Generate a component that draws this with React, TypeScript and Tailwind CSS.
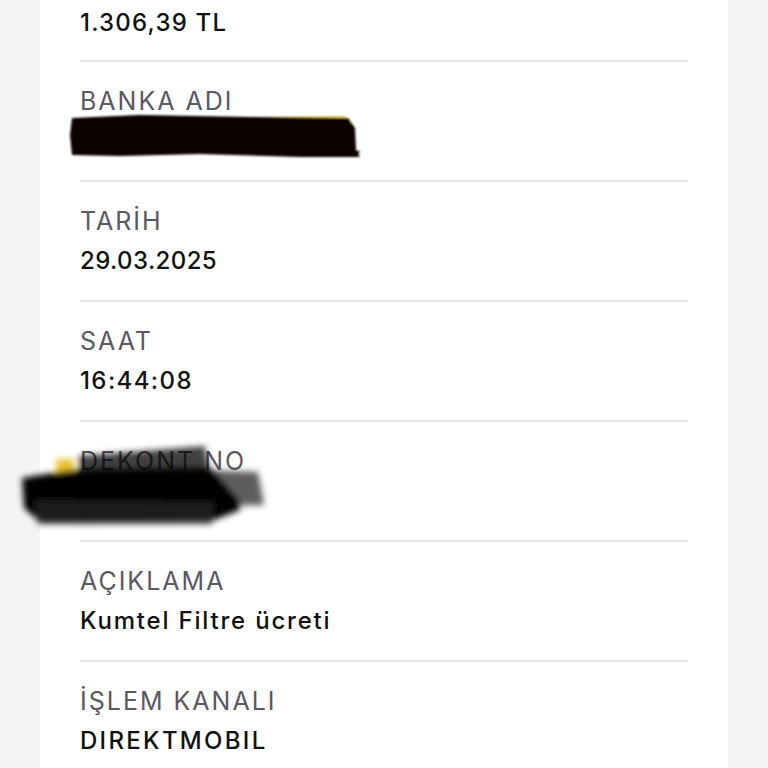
import React from "react";

const rows: { label: string; value: string; lt: string; vt: string }[] = [
  { label: "BANKA ADI", value: "", lt: "tracking-[2px]", vt: "" },
  { label: "TARİH", value: "29.03.2025", lt: "tracking-[2px]", vt: "tracking-[0.4px]" },
  { label: "SAAT", value: "16:44:08", lt: "tracking-[2px]", vt: "tracking-[1.4px]" },
  { label: "DEKONT NO", value: "", lt: "tracking-[2px]", vt: "" },
  { label: "AÇIKLAMA", value: "Kumtel Filtre ücreti", lt: "tracking-[2px]", vt: "tracking-[1.8px]" },
  { label: "İŞLEM KANALI", value: "DIREKTMOBIL", lt: "tracking-[2px]", vt: "tracking-[2.3px]" },
];

export default function App() {
  return (
    <div className="relative w-[768px] h-[768px] overflow-hidden bg-[#f4f4f6]" style={{ fontFamily: "Inter, 'Noto Sans', sans-serif" }}>
      <div className="mx-[40px] h-full bg-white px-[40px]">
        <div className="h-[3px]" />
        <div className="h-[40px] leading-[40px] text-[24px] font-medium text-[#111111] tracking-[1.2px]">1.306,39 TL</div>
        <div className="h-[17px]" />
        {rows.map((r) => (
          <div key={r.label}>
            <div className="h-[2px] bg-[#e6e6e8]" />
            <div className="pt-[19px] pb-[19px]">
              <div className={"h-[40px] leading-[40px] text-[25px] text-[#5a5860] " + r.lt}>{r.label}</div>
              <div className={"h-[40px] leading-[40px] text-[24px] font-medium text-[#111111] " + r.vt}>{r.value}</div>
            </div>
          </div>
        ))}
      </div>
      <svg className="absolute left-0 top-0 pointer-events-none" width="768" height="768" viewBox="0 0 768 768">
        <defs>
          <filter id="b1" x="-10%" y="-50%" width="120%" height="200%">
            <feGaussianBlur stdDeviation="1.2" />
          </filter>
          <filter id="b2" x="-10%" y="-50%" width="120%" height="200%">
            <feGaussianBlur stdDeviation="3" />
          </filter>
        </defs>
        <g filter="url(#b1)">
          <path d="M200 118 L345 116 L352 122 L352 140 Z" fill="#e8c53a" opacity="0.9" />
          <path d="M72 118 L140 115 L250 117 L348 118 L355 128 L356 150 L360 157 L300 157 L200 154 L120 156 L72 155 L70 135 Z" fill="#080604" />
          <circle cx="358" cy="152" r="1.5" fill="#000" />
        </g>
        <g filter="url(#b2)">
          <rect x="56" y="459" width="18" height="16" rx="3" fill="#e9c530" />
          <path d="M78 456 L205 446 L210 475 L80 478 Z" fill="#000" opacity="0.75" />
          <path d="M200 470 L258 472 L264 505 L205 506 Z" fill="#333" opacity="0.8" />
          <path d="M22 478 L70 470 L210 468 L238 500 L240 510 L214 520 L40 522 L24 508 Z" fill="#050505" />
          <path d="M34 500 L215 502 L212 524 L38 524 Z" fill="#222" opacity="0.85" />
        </g>
      </svg>
    </div>
  );
}
